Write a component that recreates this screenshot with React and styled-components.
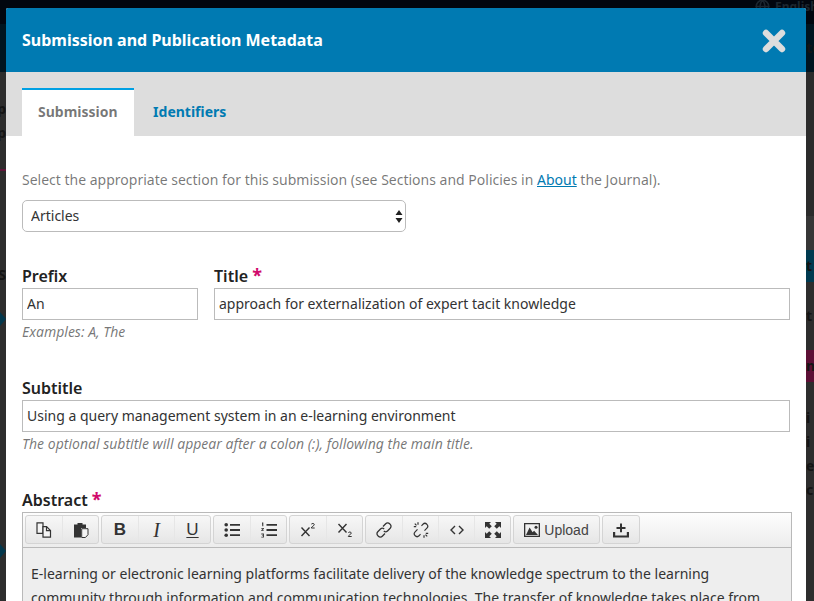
import React from 'react'
import styled, { createGlobalStyle } from 'styled-components'
import { Globe } from 'lucide-react'

const GlobalStyle = createGlobalStyle`
  html, body {
    margin: 0;
    padding: 0;
    background: #2d2d2d;
  }
  body {
    font-family: "Noto Sans", "Open Sans", sans-serif;
    color: #222;
  }
`

const Page = styled.div`
  position: relative;
  width: 814px;
  height: 601px;
  overflow: hidden;
  padding: 8px 8px 0 6px;
  box-sizing: border-box;
`

/* the dimmed journal page behind the modal, only its edges show */
const Backdrop = styled.div`
  position: absolute;
  inset: 0;
  display: flex;
  justify-content: space-between;
  font-weight: 700;
  font-size: 14px;
  color: #141414;
  background: linear-gradient(#01060f 24px, #2d2d2d 24px);
`

const Strip = styled.div`
  width: ${(props) => props.$width}px;
  height: 100%;
  display: flex;
  flex-direction: column;
  overflow: hidden;
  direction: ${(props) => (props.$right ? 'ltr' : 'rtl')};
`

const Band = styled.div`
  flex: none;
  height: ${(props) => props.$height}px;
  background: ${(props) => props.$color || 'transparent'};
  line-height: ${(props) => props.$height}px;
  white-space: nowrap;
`

const Arrow = styled.div`
  width: 0;
  height: 0;
  margin-top: 5px;
  border-left: 6px solid #03374c;
  border-top: 7px solid transparent;
  border-bottom: 7px solid transparent;
`

const TopLang = styled.div`
  position: absolute;
  top: -1px;
  left: 755px;
  display: flex;
  align-items: flex-start;
  gap: 5px;
  font-size: 12px;
  font-weight: 700;
  line-height: 16px;
  color: #1c2630;
`

const Modal = styled.div`
  position: relative;
  width: 800px;
  height: 593px;
  background: #fff;
  border-radius: 2px 2px 0 0;
  overflow: hidden;
`

const Header = styled.header`
  height: 64px;
  background: #007ab2;
  display: flex;
  align-items: center;
  justify-content: space-between;
  padding: 0 20px 0 16px;
`

const Heading = styled.h1`
  margin: 0;
  font-size: 16px;
  font-weight: 700;
  color: #fff;
`

const CloseIcon = styled.svg`
  display: block;
  width: 24px;
  height: 24px;
  margin-top: 2px;
  stroke: #ddd;
  stroke-width: 6.4;
  stroke-linecap: round;
`

const TabBar = styled.nav`
  height: 64px;
  box-sizing: border-box;
  background: #ddd;
  padding: 16px 0 0 16px;
  display: flex;
`

const Tab = styled.div`
  height: 48px;
  box-sizing: border-box;
  padding: 0 16px 4px;
  padding-left: ${(props) => (props.$active ? 16 : 19.5)}px;
  display: flex;
  align-items: center;
  font-size: 14px;
  font-weight: 700;
  color: ${(props) => (props.$active ? 'rgba(0,0,0,0.54)' : '#007ab2')};
  background: ${(props) => (props.$active ? '#fff' : 'transparent')};
  border-top: 2px solid ${(props) => (props.$active ? '#00a0e3' : 'transparent')};
`

const Body = styled.div`
  padding: 34px 16px 0;
`

const Intro = styled.p`
  margin: 0;
  font-size: 14px;
  line-height: 20px;
  color: rgba(0, 0, 0, 0.54);

  a {
    color: #007ab2;
    text-decoration: underline;
  }
`

const SelectWrap = styled.div`
  position: relative;
  width: 384px;
  margin-top: 10px;
`

const Select = styled.select`
  display: block;
  width: 100%;
  height: 32px;
  box-sizing: border-box;
  appearance: none;
  background: #fff;
  border: 1px solid #bbb;
  border-radius: 5px;
  padding: 0 8px 2px;
  font-family: inherit;
  font-size: 14px;
  color: #333;
`

const SelectArrows = styled.svg`
  position: absolute;
  top: 10px;
  right: 3px;
  width: 8px;
  height: 13px;
  fill: #222;
`

const FieldRow = styled.div`
  display: flex;
  gap: 16px;
  margin-top: 32px;
`

const Field = styled.div`
  flex: ${(props) => (props.$width ? `0 0 ${props.$width}px` : '1')};
  margin-top: ${(props) => props.$top || 0}px;
`

const Label = styled.label`
  display: block;
  height: 24px;
  font-size: 16px;
  font-weight: 600;
  line-height: 24px;
  color: #222;
`

const Star = styled.span`
  color: #d00a6c;
  font-size: 18px;
  line-height: 0;
  font-weight: 700;
`

const Input = styled.input`
  display: block;
  width: 100%;
  height: 32px;
  box-sizing: border-box;
  border: 1px solid #bbb;
  border-radius: 0;
  padding: 0 4px 2px;
  font-family: inherit;
  font-size: 14px;
  color: #333;
  background: #fff;
`

const Hint = styled.div`
  font-size: 14px;
  font-style: italic;
  line-height: 24px;
  color: rgba(0, 0, 0, 0.54);
`

const Editor = styled.div`
  width: 770px;
  box-sizing: border-box;
  border: 1px solid #b9b9b9;
  background: #eee;
`

const Toolbar = styled.div`
  height: 35px;
  box-sizing: border-box;
  padding: 2px 2px 0;
  display: flex;
  gap: 2px;
  background: linear-gradient(#fdfdfd, #ececec);
  border-bottom: 1px solid #b9b9b9;
`

const Group = styled.div`
  height: 29px;
  display: flex;
  box-sizing: border-box;
  border: 1px solid #d4d4d4;
  border-radius: 3px;
  background: linear-gradient(#f7f7f7, #e6e6e6);
`

const ToolButton = styled.div`
  width: ${(props) => props.$width || 36}px;
  flex: none;
  display: flex;
  align-items: center;
  justify-content: center;
  gap: 4px;
  color: #444;
  font-family: "Liberation Sans", Arial, sans-serif;
  font-size: 14px;
  box-sizing: border-box;

  & + & {
    border-left: 1px solid #e6e6e6;
  }

  svg {
    display: block;
    flex: none;
  }
`

const Glyph = styled.span`
  font-family: ${(props) => (props.$italic ? '"Liberation Serif"' : '"Liberation Sans"')}, sans-serif;
  font-weight: ${(props) => (props.$italic || props.$under ? 400 : 700)};
  font-style: ${(props) => (props.$italic ? 'italic' : 'normal')};
  font-size: ${(props) => (props.$italic ? 20 : 17)}px;
  line-height: 16px;
  color: #333;
  text-decoration: ${(props) => (props.$under ? 'underline' : 'none')};
  text-underline-offset: 2px;
`

const EditorText = styled.div`
  padding: 14px 8px 0;
  font-size: 14px;
  line-height: 24px;
  color: #333;
  white-space: nowrap;
`

const Ico = ({ children, ...rest }) => (
  <svg width="16" height="16" viewBox="0 0 16 16" fill="#333" {...rest}>
    {children}
  </svg>
)

const CopyIcon = () => (
  <Ico fill="none" stroke="#333" strokeWidth="1.2">
    <path d="M1 .8h6v10.500H1z" fill="#f4f4f4" />
    <path d="M7 4.600h3.500l4 4v6.600H7z" fill="#f4f4f4" />
    <path d="M10.500 4.600v4h4" />
  </Ico>
)

const PasteIcon = () => (
  <Ico>
    <path d="M1 2.500h3.500V1h5v1.500H13V6H8v9.500H1z" />
    <path d="M8.700 6.700h6.300v6l-2.600 2.800H8.700z" fill="#f4f4f4" stroke="#333" strokeWidth="1" />
  </Ico>
)

const BulletIcon = () => (
  <Ico>
    <circle cx="2.200" cy="2.800" r="1.800" />
    <circle cx="2.200" cy="8" r="1.800" />
    <circle cx="2.200" cy="13.200" r="1.800" />
    <path d="M6 2h10v1.800H6zM6 7.100h10v1.800H6zM6 12.300h10v1.800H6z" />
  </Ico>
)

const NumberIcon = () => (
  <Ico>
    <path d="M1 .6h1.300v3.600h-1zM.3 6h2.600v.8L1.400 8.400h1.600V9H.3v-.7L1.900 6.700H.3zM.3 11.600h2.600v3.800H.3v-.7h1.700v-.9H1v-.6h1v-.8H.3z" />
    <path d="M5.500 2h10.500v1.800H5.500zM5.500 7.100h10.500v1.800H5.500zM5.500 12.300h10.500v1.800H5.500z" />
  </Ico>
)

const SuperIcon = () => (
  <Ico fill="none" stroke="#333">
    <path d="M1.500 5.500 9.500 14M9.500 5.500 1.500 14" strokeWidth="1.400" />
    <path d="M11.300 2.200c.4-1 3-1 3 .4 0 1.200-3 2-3 3.400h3.400" strokeWidth="1" />
  </Ico>
)

const SubIcon = () => (
  <Ico fill="none" stroke="#333">
    <path d="M1.500 2 9.500 10.500M9.500 2 1.500 10.500" strokeWidth="1.400" />
    <path d="M11.300 10.700c.4-1 3-1 3 .4 0 1.200-3 2-3 3.400h3.400" strokeWidth="1" />
  </Ico>
)

const LinkIcon = () => (
  <Ico fill="none" stroke="#333" strokeWidth="1.300">
    <path d="M7 4.500 9.700 1.800a2.700 2.700 0 0 1 3.900 0l.6.6a2.700 2.700 0 0 1 0 3.900L11.500 9a2.700 2.700 0 0 1-3.700.1" />
    <path d="M9 11.500 6.300 14.200a2.700 2.700 0 0 1-3.900 0l-.6-.6a2.700 2.700 0 0 1 0-3.900L4.500 7a2.700 2.700 0 0 1 3.700-.1" />
  </Ico>
)

const UnlinkIcon = () => (
  <Ico fill="none" stroke="#333" strokeWidth="1.200">
    <path d="M8.500 3.800 10 2.200a2.700 2.700 0 0 1 3.800 0l.1.100a2.700 2.700 0 0 1 0 3.800L11.500 8.600" />
    <path d="M7.500 12.200 6 13.800a2.700 2.700 0 0 1-3.800 0l-.1-.1a2.700 2.700 0 0 1 0-3.800l2.400-2.500" />
    <path d="M5 .3v2.400M.8 4.600h2.400M1.800 1.700l1.700 1.700M11 13.300v2.400M12.800 11.400h2.400M12.500 12.600l1.700 1.700" />
  </Ico>
)

const CodeIcon = () => (
  <Ico fill="none" stroke="#333" strokeWidth="1.400">
    <path d="M6 4 2 8l4 4M10 4l4 4-4 4" />
  </Ico>
)

const FullIcon = () => (
  <Ico>
    <path d="M0 0h6L4.300 1.700 6.800 4.200 4.200 6.800 1.700 4.300 0 6zM16 0v6l-1.700-1.700-2.500 2.500-2.600-2.600 2.500-2.500L10 0zM0 16v-6l1.700 1.700 2.500-2.500 2.600 2.600-2.500 2.500L6 16zM16 16h-6l1.700-1.700-2.500-2.500 2.600-2.600 2.500 2.500L16 10z" />
  </Ico>
)

const ImageIcon = () => (
  <Ico>
    <path fillRule="evenodd" d="M0 1h16v14H0zM1.300 2.300v11.400h13.400V2.300z" />
    <path d="M2 13l3.600-7.500 3 4.700 1.500-1.400 3.900 4.200z" />
    <circle cx="12" cy="5.200" r="1.500" />
  </Ico>
)

const InsertIcon = () => (
  <Ico>
    <path d="M7 1.500h2v3.500h3.500v2H9v3.200H7V7H3.500V5H7z" />
    <path d="M0 10h2.200v3.500h11.600V10H16v5.500H0z" />
  </Ico>
)

const groups = [
  [<CopyIcon />, <PasteIcon />],
  [<Glyph>B</Glyph>, <Glyph $italic>I</Glyph>, <Glyph $under>U</Glyph>],
  [<BulletIcon />, <NumberIcon />],
  [<SuperIcon />, <SubIcon />],
  [<LinkIcon />, <UnlinkIcon />, <CodeIcon />, <FullIcon />],
]

export default function App() {
  return (
    <Page>
      <GlobalStyle />
      <Backdrop>
        <Strip $width={6}>
          <Band $height={24} />
          <Band $height={48} $color="#00141f" />
          <Band $height={25} />
          <Band $height={24}>p</Band>
          <Band $height={24}>p</Band>
          <Band $height={24} />
          <Band $height={2} $color="#60163a" />
          <Band $height={92} />
          <Band $height={24}>S</Band>
          <Band $height={20} />
          <Band $height={24}>
            <Arrow />
          </Band>
          <Band $height={208} />
          <Band $height={24}>
            <Arrow />
          </Band>
        </Strip>
        <Strip $width={8} $right>
          <Band $height={24} />
          <Band $height={48} $color="#00141f">te</Band>
          <Band $height={144} $color="#2b2b2b" />
          <Band $height={34} $color="#363636" />
          <Band $height={32} $color="#003a50">t</Band>
          <Band $height={18} />
          <Band $height={32}>t</Band>
          <Band $height={18} />
          <Band $height={32} $color="#5c0f35">n</Band>
          <Band $height={24} />
          <Band $height={24}>i</Band>
          <Band $height={24}>i</Band>
          <Band $height={24}>e</Band>
          <Band $height={24}>c</Band>
        </Strip>
      </Backdrop>
      <TopLang>
        <Globe size={15} color="#1c2630" strokeWidth={2.5} />
        English
      </TopLang>
      <Modal>
        <Header>
          <Heading>Submission and Publication Metadata</Heading>
          <CloseIcon viewBox="0 0 24 24">
            <path d="M4 4 20 20M20 4 4 20" />
          </CloseIcon>
        </Header>
        <TabBar>
          <Tab $active>Submission</Tab>
          <Tab>Identifiers</Tab>
        </TabBar>
        <Body>
          <Intro>
            Select the appropriate section for this submission (see Sections and Policies in{' '}
            <a href="#about">About</a> the Journal).
          </Intro>
          <SelectWrap>
            <Select defaultValue="Articles">
              <option>Articles</option>
            </Select>
            <SelectArrows viewBox="0 0 8 13">
              <path d="M4 0 7.500 5H.5zM4 13 .5 8h7z" />
            </SelectArrows>
          </SelectWrap>
          <FieldRow>
            <Field $width={176}>
              <Label>Prefix</Label>
              <Input defaultValue="An" />
              <Hint>Examples: A, The</Hint>
            </Field>
            <Field>
              <Label>
                Title <Star>*</Star>
              </Label>
              <Input defaultValue="approach for externalization of expert tacit knowledge" />
            </Field>
          </FieldRow>
          <Field $top={32}>
            <Label>Subtitle</Label>
            <Input defaultValue="Using a query management system in an e-learning environment" />
            <Hint>The optional subtitle will appear after a colon (:), following the main title.</Hint>
          </Field>
          <Field $top={32}>
            <Label>
              Abstract <Star>*</Star>
            </Label>
            <Editor>
              <Toolbar>
                {groups.map((items, i) => (
                  <Group key={i}>
                    {items.map((item, j) => (
                      <ToolButton key={j}>{item}</ToolButton>
                    ))}
                  </Group>
                ))}
                <Group>
                  <ToolButton $width={85}>
                    <ImageIcon />
                    Upload
                  </ToolButton>
                </Group>
                <Group>
                  <ToolButton>
                    <InsertIcon />
                  </ToolButton>
                </Group>
              </Toolbar>
              <EditorText>
                E-learning or electronic learning platforms facilitate delivery of the knowledge spectrum to the learning
                <br />
                community through information and communication technologies. The transfer of knowledge takes place from
              </EditorText>
            </Editor>
          </Field>
        </Body>
      </Modal>
    </Page>
  )
}
